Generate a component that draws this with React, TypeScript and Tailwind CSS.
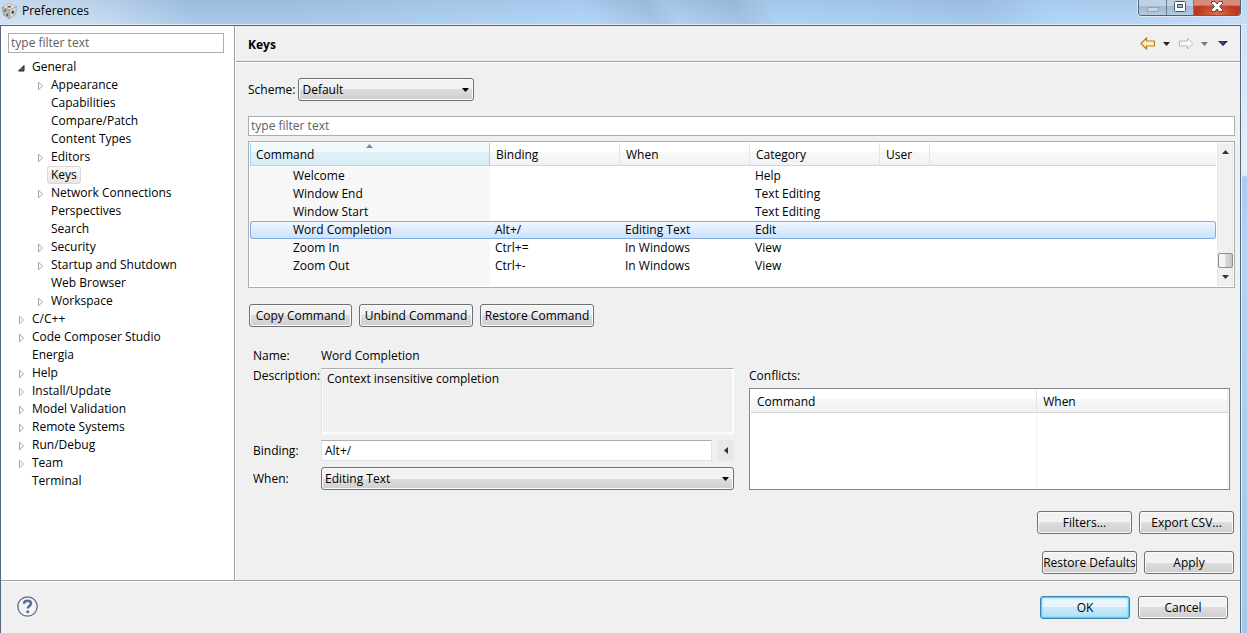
import { useState } from "react"

type TreeNode = { label: string; leaf?: boolean; open?: boolean; children?: TreeNode[] }

const tree: TreeNode[] = [
  {
    label: "General",
    open: true,
    children: [
      { label: "Appearance" },
      { label: "Capabilities", leaf: true },
      { label: "Compare/Patch", leaf: true },
      { label: "Content Types", leaf: true },
      { label: "Editors" },
      { label: "Keys", leaf: true },
      { label: "Network Connections" },
      { label: "Perspectives", leaf: true },
      { label: "Search", leaf: true },
      { label: "Security" },
      { label: "Startup and Shutdown" },
      { label: "Web Browser", leaf: true },
      { label: "Workspace" },
    ],
  },
  { label: "C/C++" },
  { label: "Code Composer Studio" },
  { label: "Energia", leaf: true },
  { label: "Help" },
  { label: "Install/Update" },
  { label: "Model Validation" },
  { label: "Remote Systems" },
  { label: "Run/Debug" },
  { label: "Team" },
  { label: "Terminal", leaf: true },
]

const commands = [
  { name: "Welcome", binding: "", when: "", category: "Help" },
  { name: "Window End", binding: "", when: "", category: "Text Editing" },
  { name: "Window Start", binding: "", when: "", category: "Text Editing" },
  { name: "Word Completion", binding: "Alt+/", when: "Editing Text", category: "Edit" },
  { name: "Zoom In", binding: "Ctrl+=", when: "In Windows", category: "View" },
  { name: "Zoom Out", binding: "Ctrl+-", when: "In Windows", category: "View" },
]

const headBg = "bg-[linear-gradient(#ffffff_0_40%,#f7f8fa_40%,#f1f2f4_100%)]"

const Twistie = ({ node }: { node: TreeNode }) => {
  if (node.leaf) return <span className="w-[7px]" />
  return (
    <button className="w-[7px] pt-[2px]" aria-label={"Toggle " + node.label}>
      {node.open ? (
        <svg width="7" height="8" viewBox="0 0 7 8">
          <path d="M6 1.5V7H.5Z" fill="#595959" stroke="#262626" />
        </svg>
      ) : (
        <svg width="7" height="10" viewBox="0 0 7 10">
          <path d="M1.5 1.2V8.8L5.5 5Z" fill="#fff" stroke="#a6a6a6" />
        </svg>
      )}
    </button>
  )
}

const TreeItem = ({ node, selected, onSelect }: { node: TreeNode; selected: string; onSelect: (l: string) => void }) => (
  <li>
    <div className="flex h-[18px] items-center gap-[3px]">
      <Twistie node={node} />
      <button
        className={
          selected === node.label
            ? "h-[18px] rounded-[3px] border border-[#d9d9d9] bg-linear-to-b from-[#fafafa] to-[#e5e5e5] px-[3px] leading-4"
            : "h-[18px] border border-transparent px-[3px] leading-4"
        }
        onClick={() => onSelect(node.label)}
      >
        {node.label}
      </button>
    </div>
    {node.open && node.children && (
      <ul className="pl-[19px]">
        {node.children.map((c) => (
          <TreeItem key={c.label} node={c} selected={selected} onSelect={onSelect} />
        ))}
      </ul>
    )}
  </li>
)

const Button = ({ children, className, primary }: { children: string; className: string; primary?: boolean }) => (
  <button
    className={
      (primary
        ? "border-[#3c7fb1] bg-[linear-gradient(#eaf6fd_0_50%,#c9e9fa_50%,#b2dff6)] shadow-[inset_0_0_0_1px_#48d8fb,inset_0_0_2px_1px_#48d8fb] "
        : "border-[#707070] bg-[linear-gradient(#f2f2f2_0_50%,#dddddd_50%,#cfcfcf)] shadow-[inset_0_0_0_1px_#fbfbfb] ") +
      "h-[23px] rounded-[3px] border text-center whitespace-nowrap " +
      className
    }
  >
    {children}
  </button>
)

const Select = ({ id, value, className }: { id: string; value: string; className: string }) => (
  <div className={"relative " + className}>
    <select
      id={id}
      className="block h-[23px] w-full appearance-none rounded-[3px] border border-[#707070] bg-[linear-gradient(#f2f2f2_0_50%,#dddddd_50%,#cfcfcf)] px-[3px] shadow-[inset_0_0_0_1px_#fbfbfb]"
    >
      <option>{value}</option>
    </select>
    <svg className="pointer-events-none absolute top-[10px] right-[5px]" width="7" height="4" viewBox="0 0 7 4">
      <path d="M0 0H7L3.5 4Z" fill="#000" />
    </svg>
  </div>
)

const TitleBar = () => (
  <div className="flex h-[25px] items-start justify-between bg-[linear-gradient(rgba(120,160,205,0.18),rgba(190,225,255,0.25)),linear-gradient(60deg,#d8e5f2_0%,#cbdcee_8%,#a3c1e1_16%,#a3c3e3_24%,#aacbea_34%,#b1d3f4_47%,#a2bedb_52%,#acccea_54%,#9fbcd9_59%,#accff0_62%,#a9ccef_68%,#a0c1e2_78%,#b1d4f6_84%,#b4d3f2_90%,#cfe1f4_100%)] shadow-[inset_0_-1px_0_#dfeaf5]">
    <div className="flex h-[22px] items-center gap-[4px] pl-[1px]">
      <svg width="17" height="18" viewBox="0 0 17 18">
        <path d="M8 1.500 15.500 4.500 8.500 8 1 5Z" fill="#e6e6e6" stroke="#9a9a9a" strokeWidth=".6" />
        <path d="M1 5 8.500 8V16.500L2.500 13Z" fill="#b5b5b5" stroke="#8c8c8c" strokeWidth=".6" />
        <path d="M15.500 4.500 8.500 8V16.500L14.500 12.500Z" fill="#dadada" stroke="#8c8c8c" strokeWidth=".6" />
        <ellipse cx="8.200" cy="4.700" rx="2.200" ry="1" fill="#6a6a6a" />
        <ellipse cx="4" cy="8.600" rx=".9" ry="1.200" fill="#555" />
        <ellipse cx="6.300" cy="13" rx=".9" ry="1.200" fill="#555" />
        <ellipse cx="11.800" cy="10.300" rx="1.300" ry="1.700" fill="#4a4a4a" />
      </svg>
      <h1>Preferences</h1>
    </div>
    <div className="mr-[6px] flex h-4 overflow-hidden rounded-b-[4px] border border-t-0 border-[#52627a] shadow-[0_0_0_1px_#d9e8f8]">
      <button aria-label="Minimize" className="flex w-7 items-center justify-center border-r border-[#6b7d94] bg-[linear-gradient(#c0d1e4_0_40%,#9fb6ce_40%,#b5cbe2)]">
        <svg width="12" height="14" viewBox="0 0 12 14">
          <rect x=".5" y="6.500" width="11" height="4" fill="#c8d3df" stroke="#93a2b5" />
        </svg>
      </button>
      <button aria-label="Maximize" className="flex w-[27px] items-center justify-center border-r border-[#6b7d94] bg-[linear-gradient(#c0d1e4_0_40%,#9fb6ce_40%,#b5cbe2)]">
        <svg width="12" height="14" viewBox="0 0 12 14">
          <rect x=".5" y=".5" width="11" height="10" rx="1" fill="#fff" stroke="#4c5468" />
          <rect x="3.500" y="3.500" width="5" height="3" fill="#a9bdd3" stroke="#4c5468" />
        </svg>
      </button>
      <button aria-label="Close" className="flex w-[46px] items-center justify-center bg-[radial-gradient(ellipse_at_bottom,#e0704a,transparent_60%),linear-gradient(#d98a7c_0_35%,#bd3a23_40%,#b9391f)]">
        <svg width="14" height="14" viewBox="0 0 14 14">
          <path d="M1.500 .5H5L7 3 9 .5H12.500V2.500L9.500 5.500 12.500 8.500V10.500H9L7 8 5 10.500H1.500V8.500L4.500 5.500 1.500 2.500Z" fill="#fff" stroke="#5b4550" />
        </svg>
      </button>
    </div>
  </div>
)

const HistoryBar = () => (
  <div className="flex items-center">
    <button aria-label="Back">
      <svg width="15" height="13" viewBox="0 0 15 13">
        <path d="M1 6.500 6.500 1V4H14.500V9H6.500V12Z" fill="#fdf0b8" stroke="#b8801a" strokeWidth="1.200" />
      </svg>
    </button>
    <button aria-label="Back history" className="ml-2">
      <svg width="7" height="4" viewBox="0 0 7 4"><path d="M0 0H7L3.500 4Z" fill="#222" /></svg>
    </button>
    <button aria-label="Forward" className="ml-[9px]">
      <svg width="15" height="13" viewBox="0 0 15 13">
        <path d="M14 6.500 8.500 1V4H.5V9H8.500V12Z" fill="#f7f7f5" stroke="#b8b8b8" />
      </svg>
    </button>
    <button aria-label="Forward history" className="ml-[7px]">
      <svg width="7" height="4" viewBox="0 0 7 4"><path d="M0 0H7L3.500 4Z" fill="#777" /></svg>
    </button>
    <button aria-label="Menu" className="ml-[10px]">
      <svg width="10" height="5" viewBox="0 0 10 5">
        <path d="M0 0H10L5 5Z" fill="#1c1a33" />
        <path d="M1.500 .5H7.500L4.500 3.500Z" fill="#4a44a0" />
      </svg>
    </button>
  </div>
)

const CommandTable = () => {
  const [selected, setSelected] = useState("Word Completion")
  return (
    <div className="mt-[5px] flex border border-[#abadb3] bg-white p-px">
      <table className="w-full flex-1 table-fixed border-separate border-spacing-0 text-left">
        <thead>
          <tr>
            <th className="relative w-[240px] p-0 pb-px font-normal">
              <div className="h-[23px] border border-t-0 border-[#96d9f9] bg-[linear-gradient(#f2f9fc_0_40%,#e1f1f9_40%,#d8ecf6)] px-[5px] leading-6">
                Command
              </div>
              <svg className="absolute top-px left-[116px]" width="7" height="4" viewBox="0 0 7 4">
                <path d="M0 4H7L3.500 0Z" fill="#5f93b4" />
              </svg>
            </th>
            {["Binding", "When", "Category"].map((h) => (
              <th key={h} className="w-[130px] p-0 pb-px font-normal">
                <div className={"h-[23px] border-r border-b border-r-[#e3e4e6] border-b-[#d5d5d5] px-[6px] leading-6 " + headBg}>{h}</div>
              </th>
            ))}
            <th className="w-[50px] p-0 pb-px font-normal">
              <div className={"h-[23px] border-r border-b border-r-[#e3e4e6] border-b-[#d5d5d5] px-[6px] leading-6 " + headBg}>User</div>
            </th>
            <th className="p-0 pb-px">
              <div className={"h-[23px] border-b border-[#d5d5d5] " + headBg} />
            </th>
          </tr>
        </thead>
        <tbody>
          {commands.map((c) => {
            const on = c.name === selected
            const cell = on
              ? "h-[18px] border-y border-[#84acdd] bg-[linear-gradient(#f0f7ff,#cbe1fd)] py-0 leading-4 "
              : "h-[18px] py-0 "
            return (
              <tr key={c.name} className="leading-[18px]" onClick={() => setSelected(c.name)}>
                <td className={cell + (on ? "rounded-l-[3px] border-l pl-[42px]" : "bg-[#f7f7f7] pl-[43px]")}>{c.name}</td>
                <td className={cell + "pl-[5px]"}>{c.binding}</td>
                <td className={cell + "pl-[5px]"}>{c.when}</td>
                <td className={cell + "pl-[5px]"}>{c.category}</td>
                <td className={cell} />
                <td className={cell + (on ? "rounded-r-[3px] border-r" : "")} />
              </tr>
            )
          })}
          <tr>
            <td className="h-[11px] bg-[#f7f7f7] p-0" />
          </tr>
        </tbody>
      </table>
      <div className="ml-px flex w-4 flex-col items-center border-x border-[#e6e6e6] bg-[#f0f0f0]">
        <button aria-label="Scroll up" className="flex h-[17px] items-center">
          <svg width="7" height="4" viewBox="0 0 7 4"><path d="M0 4H7L3.500 0Z" fill="#333" /></svg>
        </button>
        <div className="flex-1" />
        <div className="h-[15px] w-[15px] rounded-[2px] border border-[#8f8f8f] bg-[linear-gradient(90deg,#f3f3f3_0_45%,#dadadc_50%,#c4c4c8)]" />
        <button aria-label="Scroll down" className="flex h-[18px] items-center">
          <svg width="7" height="4" viewBox="0 0 7 4"><path d="M0 0H7L3.500 4Z" fill="#333" /></svg>
        </button>
      </div>
    </div>
  )
}

const Details = () => (
  <div className="mt-[19px] grid grid-cols-2 gap-x-[15px] px-[5px]">
    <div className="grid grid-cols-[68px_1fr]">
      <span className="h-[22px] leading-5">Name:</span>
      <span className="leading-5">Word Completion</span>
      <label htmlFor="description" className="leading-4">Description:</label>
      <textarea
        id="description"
        readOnly
        className="block h-[66px] resize-none border border-t-[#abadb3] border-r-white border-b-white border-l-[#e2e3ea] bg-[#f0f0f0] px-[5px] py-[2px] leading-4 shadow-[inset_0_0_0_1px_#fafafa]"
        defaultValue="Context insensitive completion"
      />
      <label htmlFor="binding" className="mt-[6px] leading-[22px]">Binding:</label>
      <div className="mt-[6px] flex gap-[5px]">
        <input
          id="binding"
          className="h-[21px] min-w-0 flex-1 border border-[#e2e3ea] border-t-[#abadb3] bg-white px-[3px]"
          defaultValue="Alt+/"
        />
        <button aria-label="Add special key" className="flex h-[21px] w-[17px] items-center justify-center bg-[#e8e8e8]">
          <svg width="4" height="7" viewBox="0 0 4 7"><path d="M4 0V7L0 3.500Z" fill="#333" /></svg>
        </button>
      </div>
      <label htmlFor="when" className="mt-[5px] leading-[23px]">When:</label>
      <Select id="when" value="Editing Text" className="mt-[5px]" />
    </div>
    <div className="flex flex-col pt-[22px]">
      <span className="leading-4" id="conflicts">Conflicts:</span>
      <div className="mt-1 flex flex-1 flex-col border border-[#828790] bg-white p-px">
        <table aria-labelledby="conflicts" className="h-full w-full table-fixed border-separate border-spacing-0 text-left">
          <thead>
            <tr>
              <th className={"h-[23px] w-3/5 border-r border-b border-r-[#e3e4e6] border-b-[#d5d5d5] px-[6px] pt-[2px] pb-0 font-normal " + headBg}>Command</th>
              <th className={"h-[23px] border-r border-b border-r-[#e3e4e6] border-b-[#d5d5d5] px-[6px] pt-[2px] pb-0 font-normal " + headBg}>When</th>
            </tr>
          </thead>
          <tbody>
            <tr>
              <td className="border-r border-[#edf3fa]" />
              <td className="border-r border-[#edf3fa]" />
            </tr>
          </tbody>
        </table>
      </div>
    </div>
  </div>
)

export default function App() {
  const [page, setPage] = useState("Keys")

  return (
    <div className="flex min-h-screen flex-col bg-[#abcff2] font-['Open_Sans','Noto_Sans',sans-serif] text-[12px] leading-4 text-black">
      <TitleBar />
      <div className="flex flex-1 bg-[linear-gradient(#cfe2f7_0,#e6f0fb_150px,#a9cdf0_152px,#b3d4f5_230px,#a4c8ea)] pr-[6px]">
        <div className="flex flex-1 flex-col border border-b-0 border-[#55677f] bg-[#f0f0f0] shadow-[1px_0_0_#e3effb]">
          <div className="flex border-b border-[#a0a0a0]">
            <aside className="w-[234px] shrink-0 border-r border-[#a0a0a0] bg-white">
              <div className="pt-[7px] pr-[10px] pl-[7px]">
                <input
                  aria-label="Filter preferences"
                  placeholder="type filter text"
                  className="block h-5 w-full border border-[#abadb3] px-[2px] pb-px placeholder:text-[#606060]"
                />
              </div>
              <ul className="pt-[5px] pl-[17px]">
                {tree.map((n) => (
                  <TreeItem key={n.label} node={n} selected={page} onSelect={setPage} />
                ))}
              </ul>
            </aside>
            <main className="min-w-0 flex-1 border-l border-white">
              <div className="flex h-9 items-center justify-between border-b border-[#a0a0a0] pr-3 pl-3 shadow-[0_1px_0_#fff]">
                <h2 className="pt-[3px] text-[12px] font-bold">Keys</h2>
                <HistoryBar />
              </div>
              <div className="pt-4 pr-[5px] pb-[6px] pl-3">
                <div className="flex items-center gap-[3px]">
                  <label htmlFor="scheme">Scheme:</label>
                  <Select id="scheme" value="Default" className="w-[176px]" />
                </div>
                <input
                  aria-label="Filter commands"
                  placeholder="type filter text"
                  className="mt-[15px] block h-5 w-full border border-[#abadb3] bg-white px-[2px] pb-px placeholder:text-[#606060]"
                />
                <CommandTable />
                <div className="mt-4 flex gap-[7px] pl-px">
                  <Button className="w-[103px]">Copy Command</Button>
                  <Button className="w-[114px]">Unbind Command</Button>
                  <Button className="w-[114px]">Restore Command</Button>
                </div>
                <Details />
                <div className="mt-[21px] flex justify-end gap-[7px] pr-px">
                  <Button className="w-[95px]">Filters...</Button>
                  <Button className="w-[95px]">Export CSV...</Button>
                </div>
                <div className="mt-[17px] flex justify-end gap-[7px] pr-px">
                  <Button className="w-[95px]">Restore Defaults</Button>
                  <Button className="w-[90px]">Apply</Button>
                </div>
              </div>
            </main>
          </div>
          <footer className="flex items-start justify-between border-t border-white pt-[14px] pr-3 pl-4">
            <button aria-label="Help">
              <svg width="21" height="21" viewBox="0 0 21 21" fill="none">
                <circle cx="10.500" cy="10.500" r="9.700" fill="#f4f4f6" stroke="#5a6a8c" strokeWidth="1.300" />
                <path d="M7 7.800C7 5.500 8.600 4.700 10.500 4.700S14 5.700 14 7.600C14 9.900 10.700 10 10.700 12.600" stroke="#5a6a96" strokeWidth="2.400" />
                <circle cx="10.700" cy="15.800" r="1.500" fill="#5a6a96" />
              </svg>
            </button>
            <div className="flex gap-2">
              <Button primary className="w-[90px]">OK</Button>
              <Button className="w-[90px]">Cancel</Button>
            </div>
          </footer>
        </div>
      </div>
    </div>
  )
}
